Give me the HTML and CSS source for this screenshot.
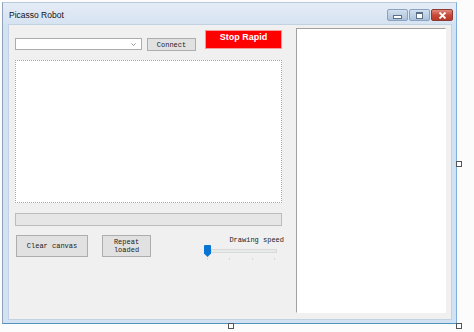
FILE: index.html
```html
<!DOCTYPE html>
<html>
	<head>
		<meta charset="UTF-8">
		<title>Picasso Robot</title>
		<link rel="stylesheet" href="styles.css">
	</head>
	<body>
		<div class="window">
			<div class="titlebar">
				<span class="title">Picasso Robot</span>
				<div class="caption-btns">
					<span class="cap-btn cap-min"><i></i></span>
					<span class="cap-btn cap-max"><i></i></span>
					<span class="cap-btn cap-close">
						<svg width="9" height="7" viewBox="0 0 9 7"><path d="M1.5 0.5 L7.5 6.5 M7.5 0.5 L1.5 6.5" stroke="#fff" stroke-width="1.8"/></svg>
					</span>
				</div>
			</div>
			<div class="client">
				<div class="left-col">
					<div class="top-row">
						<div class="combo">
							<svg class="combo-arrow" width="5" height="3" viewBox="0 0 5 3"><path d="M0.5 0.5 L2.5 2.5 L4.5 0.5" fill="none" stroke="#888" stroke-width="0.9"/></svg>
						</div>
						<div class="btn btn-connect">Connect</div>
						<div class="btn-stop">Stop Rapid</div>
					</div>
					<div class="canvas-box"></div>
					<div class="progress"></div>
					<div class="bottom-row">
						<div class="btn btn-clear">Clear canvas</div>
						<div class="btn btn-repeat">Repeat<br>loaded</div>
						<div class="speed">
							<div class="speed-label">Drawing speed</div>
							<div class="slider">
								<svg class="thumb" width="7" height="12" viewBox="0 0 7 12"><path d="M0 1 Q0 0 1 0 L6 0 Q7 0 7 1 L7 8.5 L3.5 12 L0 8.5 Z" fill="#0a74d4"/></svg>
								<div class="track"></div>
							</div>
							<div class="ticks"><i></i><i></i><i></i><i></i></div>
						</div>
					</div>
				</div>
				<div class="panel"></div>
			</div>
		</div>
		<span class="handle handle-right"></span>
		<span class="handle handle-bottom"></span>
		<span class="handle handle-corner"></span>
	</body>
</html>
```
FILE: styles.css
```css
html, body {
	margin: 0;
	padding: 0;
}
body {
	width: 474px;
	height: 332px;
	background: #fcfcfc;
	overflow: hidden;
	font-family: "Liberation Mono", "DejaVu Sans Mono", monospace;
}

.window {
	width: 453px;
	height: 320px;
	margin: 2px 0 0 2px;
	border: 1px solid #8fa3ba;
	border-top-color: #b9c9dc;
	border-right-color: #7fb0dc;
	border-bottom-color: #4f93bf;
	background: #d3e2f2;
	display: flex;
	flex-direction: column;
}

.titlebar {
	height: 21px;
	display: flex;
	align-items: flex-start;
	background: linear-gradient(#e4ecf6, #d6e3f1);
}
.title {
	font-family: "Liberation Sans", Arial, sans-serif;
	font-size: 8.5px;
	color: #111;
	margin: 7px 0 0 6px;
}
.caption-btns {
	margin: 6px 3px 0 auto;
	display: flex;
	gap: 1px;
}
.cap-btn {
	height: 10px;
	border: 1px solid #8aa2c0;
	border-radius: 2px;
	display: flex;
	align-items: center;
	justify-content: center;
}
.cap-min, .cap-max {
	width: 19px;
	background: linear-gradient(#d2e0ef, #abc1da);
}
.cap-min i {
	display: block;
	width: 7px;
	height: 2px;
	margin-top: 3px;
	background: #fff;
	border: 1px solid #5b6f88;
}
.cap-max i {
	display: block;
	width: 5px;
	height: 4px;
	background: #fff;
	border: 1px solid #5b6f88;
	border-top-width: 2px;
}
.cap-close {
	width: 20px;
	border-color: #8d3b32;
	background: linear-gradient(#e08a7c, #c84a3a 50%, #b8392b);
}

.client {
	margin: 0 4px 0 5px;
	border: 1px solid #c3d2e3;
	background: #f0f0f0;
	display: flex;
	align-items: flex-start;
	padding: 3px 0 0 6px;
	box-sizing: border-box;
	height: 296px;
	gap: 14px;
}

.left-col {
	width: 267px;
	padding-top: 2px;
}

.top-row {
	display: flex;
	align-items: flex-start;
	height: 21px;
}
.combo {
	width: 127px;
	height: 12px;
	margin-top: 8px;
	box-sizing: border-box;
	border: 1px solid #acacac;
	background: #fff;
	display: flex;
	align-items: center;
	justify-content: flex-end;
}
.combo-arrow {
	margin-right: 5px;
}

.btn {
	box-sizing: border-box;
	background: #e1e1e1;
	border: 1px solid #adadad;
	font-size: 7px;
	line-height: 8px;
	color: #222;
	display: flex;
	align-items: center;
	justify-content: center;
	text-align: center;
}
.btn-connect {
	width: 49px;
	height: 13px;
	margin: 8px 0 0 5px;
}
.btn-stop {
	width: 77px;
	height: 19px;
	margin-left: 9px;
	box-sizing: border-box;
	background: #ff0000;
	border: 1px solid #f39a9a;
	color: #fff;
	font-family: "Liberation Sans", Arial, sans-serif;
	font-weight: bold;
	font-size: 9px;
	line-height: 10px;
	text-align: center;
	padding-top: 1px;
}

.canvas-box {
	height: 143px;
	margin-top: 9px;
	box-sizing: border-box;
	background: #fff;
	border: 1px dotted #a6a6a6;
}

.progress {
	height: 13px;
	margin-top: 10px;
	box-sizing: border-box;
	background: #e6e6e6;
	border: 1px solid #bcbcbc;
}

.bottom-row {
	display: flex;
	align-items: flex-start;
	margin-top: 9px;
}
.btn-clear {
	width: 72px;
	height: 22px;
	margin-left: 1px;
}
.btn-repeat {
	width: 49px;
	height: 22px;
	margin-left: 14px;
	padding-bottom: 1px;
}

.speed {
	width: 84px;
	margin: 0 -2px 0 auto;
}
.speed-label {
	font-size: 7px;
	line-height: 8px;
	color: #222;
	text-align: right;
	margin-top: 1px;
}
.slider {
	display: flex;
	align-items: center;
	height: 12px;
	margin-top: 1px;
	padding-left: 4px;
}
.track {
	flex: 1;
	height: 2px;
	margin: 0 7px 0 0;
	background: #e7eaea;
	border: 1px solid #dadada;
}
.ticks {
	display: flex;
	justify-content: space-between;
	padding: 0 9px 0 7px;
	margin-top: 1px;
}
.ticks i {
	display: block;
	width: 1px;
	height: 2px;
	background: #d8d8d8;
}

.panel {
	width: 150px;
	height: 285px;
	box-sizing: border-box;
	background: #fff;
	border: 1px solid #fff;
	border-top-color: #a0a0a0;
	border-left-color: #a0a0a0;
}

.handle {
	position: absolute;
	width: 4px;
	height: 4px;
	background: #fff;
	border: 1px solid #555;
}
.handle-right {
	left: 456px;
	top: 161px;
}
.handle-bottom {
	left: 228px;
	top: 323px;
}
.handle-corner {
	left: 456px;
	top: 323px;
}
```
